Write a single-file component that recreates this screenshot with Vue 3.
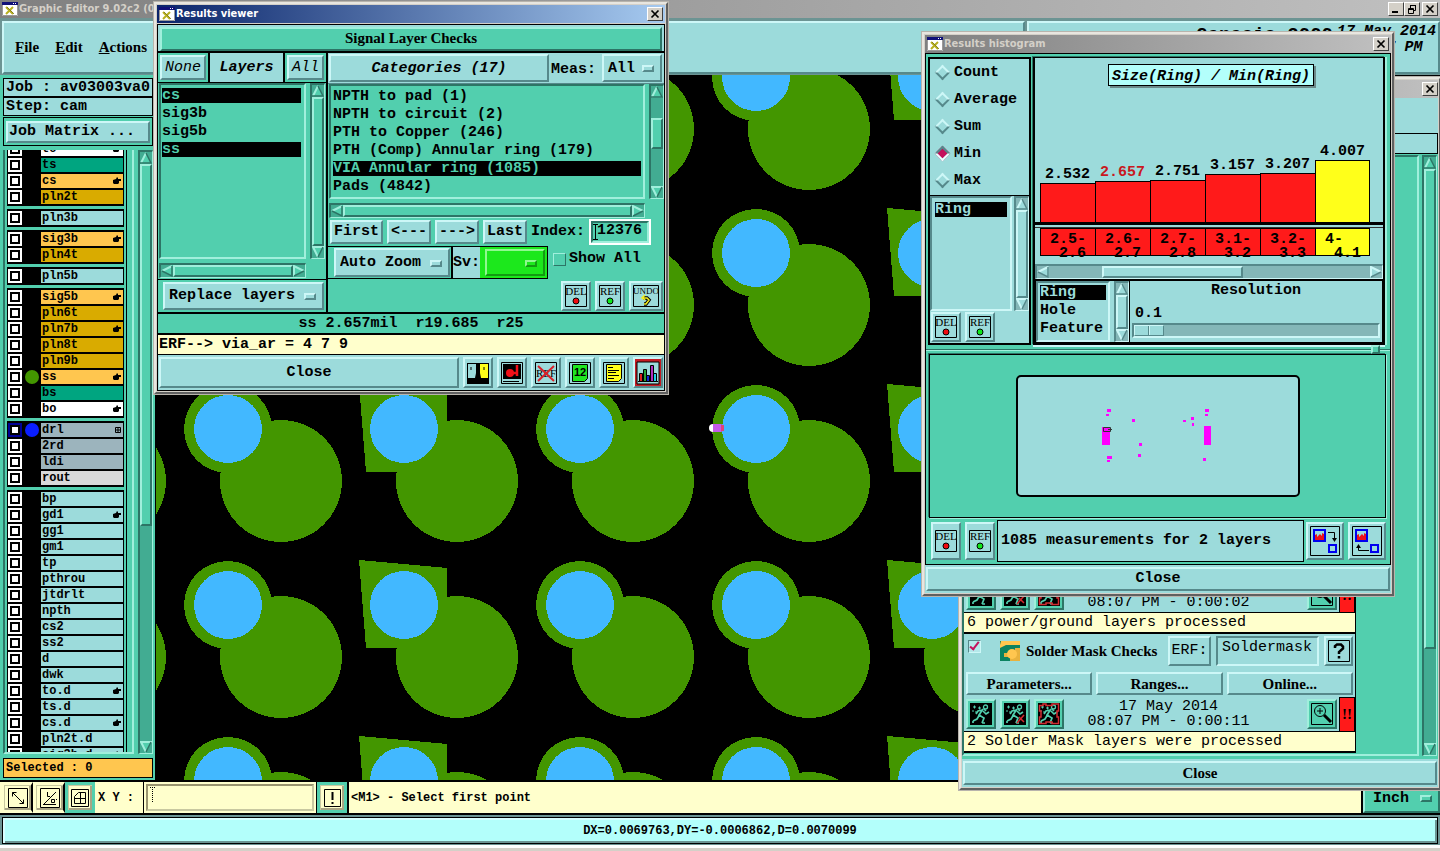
<script setup>
import { h, ref } from 'vue'

const arrow = (id) => h('svg', { class: 'sb-arrow', width: 12, height: 12, viewBox: '0 0 12 12', 'aria-hidden': 'true' }, [h('use', { href: '#' + id })])
const track = (before, size, rest) => h('div', { class: 'sb-track' }, [
  h('div', { style: { flexGrow: before } }),
  h('div', { class: 'sb-thumb', style: { flexGrow: size } }),
  h('div', { style: { flexGrow: rest } })
])
const VBar = ({ parts = [0, 1, 0] }) => h('div', { class: 'sb sb-v' }, [arrow('a-up'), track(...parts), arrow('a-down')])
VBar.props = ['parts']
const HBar = ({ parts = [0, 1, 0] }) => h('div', { class: 'sb sb-h' }, [arrow('a-left'), track(...parts), arrow('a-right')])
HBar.props = ['parts']

const L = (name, kind = 'c', mark = '', dot = '') => ({ name, kind, mark, dot })
const groups = [
  [L('to', 'w', 'h'), L('ts', 'g'), L('cs', 'o', 'h'), L('pln2t', 'd')],
  [L('pln3b')],
  [L('sig3b', 'o', 'h'), L('pln4t', 'd')],
  [L('pln5b')],
  [L('sig5b', 'o', 'h'), L('pln6t', 'd'), L('pln7b', 'd', 'h'), L('pln8t', 'd'), L('pln9b', 'd'), L('ss', 'o', 'h', '#439600'), L('bs', 'g'), L('bo', 'w', 'h')],
  [L('drl', 's', 'x', '#0a1eff'), L('2rd', 's'), L('ldi', 's'), L('rout', 'l')],
  [L('bp'), L('gd1', 'c', 'h'), L('gg1'), L('gm1'), L('tp'), L('pthrou'), L('jtdrlt'), L('npth'), L('cs2'), L('ss2'), L('d'), L('dwk'), L('to.d', 'c', 'h'), L('ts.d'), L('cs.d', 'c', 'h'), L('pln2t.d'), L('sig3b.d', 'c', 'h')]
]

const pads = []
for (let r = 0; r < 5; r++) {
  for (let c = 0; c < 6; c++) {
    pads.push({ x: -104 + c * 176, y: 2 + r * 176, square: c === 2 || c === 5 })
  }
}

const viewerLayers = [['cs', true], ['sig3b', false], ['sig5b', false], ['ss', true]]
const categories = ['NPTH to pad (1)', 'NPTH to circuit (2)', 'PTH to Copper (246)', 'PTH (Comp) Annular ring (179)', 'VIA Annular ring (1085)', 'Pads (4842)']
const category = ref(4)
const index = ref('12376')
const stats = ['Count', 'Average', 'Sum', 'Min', 'Max']
const stat = ref('Min')
const bars = [
  { v: '2.532', a: '2.5-', b: '2.6', hgt: 39 },
  { v: '2.657', a: '2.6-', b: '2.7', hgt: 41, hot: true },
  { v: '2.751', a: '2.7-', b: '2.8', hgt: 42 },
  { v: '3.157', a: '3.1-', b: '3.2', hgt: 48 },
  { v: '3.207', a: '3.2-', b: '3.3', hgt: 49 },
  { v: '4.007', a: '4-', b: '4.1', hgt: 62, ok: true }
]
const dots = [
  [86, 52, 8, 18], [188, 51, 7, 19], [91, 34, 4, 3], [90, 39, 3, 2], [116, 44, 3, 3], [123, 68, 3, 3], [122, 79, 3, 3],
  [91, 81, 5, 3], [91, 85, 3, 2], [167, 45, 3, 2], [175, 42, 3, 3], [176, 48, 2, 3], [189, 34, 4, 3], [189, 39, 3, 2], [187, 83, 3, 3]
]
const checks = [
  { title: 'Power/Ground Checks', erf: 'Inner', time: '08:07 PM - 0:00:02', msg: '6 power/ground layers processed' },
  { title: 'Solder Mask Checks', erf: 'Soldermask', time: '08:07 PM - 0:00:11', msg: '2 Solder Mask layers were processed' }
]
</script>

<template>
  <div class="desktop cyan">
    <svg class="defs" width="0" height="0" aria-hidden="true">
      <symbol id="a-up" viewBox="0 0 12 12"><path d="M6 0L12 12H0Z" fill="var(--bg)" /><path d="M6 1L1 11" stroke="var(--hi)" stroke-width="2" /><path d="M6 1L11 11H0" fill="none" stroke="var(--lo)" stroke-width="1.5" /></symbol>
      <symbol id="a-down" viewBox="0 0 12 12"><path d="M0 0H12L6 12Z" fill="var(--bg)" /><path d="M12 1H1L6 11" fill="none" stroke="var(--hi)" stroke-width="2" /><path d="M11 1L6 11" stroke="var(--lo)" stroke-width="1.5" /></symbol>
      <symbol id="a-left" viewBox="0 0 12 12"><path d="M0 6L12 0V12Z" fill="var(--bg)" /><path d="M1 6L11 1" stroke="var(--hi)" stroke-width="2" /><path d="M1 6L11 11V1" fill="none" stroke="var(--lo)" stroke-width="1.5" /></symbol>
      <symbol id="a-right" viewBox="0 0 12 12"><path d="M0 0L12 6L0 12Z" fill="var(--bg)" /><path d="M1 11V1L11 6" fill="none" stroke="var(--hi)" stroke-width="2" /><path d="M11 6L1 11" stroke="var(--lo)" stroke-width="1.5" /></symbol>
      <symbol id="win-icon" viewBox="0 0 16 16"><path d="M0 1H16V15H0Z" fill="#fff" /><path d="M0 1H16V4H0Z" fill="#101078" /><path d="M11 2h1v1h-1zM13 2h1v1h-1z" fill="#fff" /><path d="M4 6L11 13M11 6L4 13" stroke="#b8b020" stroke-width="2" /><path d="M5 6L12 13" stroke="#6c6810" stroke-width=".7" /><path d="M.5 4V14.5H15.5V4" fill="none" stroke="#9a9a9a" /></symbol>
      <symbol id="x" viewBox="0 0 10 10"><path d="M1.500 1.500L8.500 8.500M8.500 1.500L1.500 8.500" stroke="#000" stroke-width="1.700" /></symbol>
      <symbol id="del" viewBox="0 0 24 24"><path d="M1.500 1.500H22.500V22.500H1.500Z" fill="none" stroke="#000" /><text x="12" y="11" text-anchor="middle" font-family="Liberation Serif, serif" font-weight="400" font-size="11">DEL</text><circle cx="12" cy="17" r="3" fill="#f00b10" stroke="#000" /></symbol>
      <symbol id="ref" viewBox="0 0 24 24"><path d="M1.500 1.500H22.500V22.500H1.500Z" fill="none" stroke="#000" /><text x="12" y="11" text-anchor="middle" font-family="Liberation Serif, serif" font-weight="400" font-size="11">REF</text><circle cx="12" cy="17" r="3" fill="#10e81c" stroke="#000" /></symbol>
      <symbol id="hand" viewBox="0 0 8 8"><path d="M0 3L3 2L4 0L5 1V2H8V4H6V6L5 7H1L0 6Z" fill="#000" /></symbol>
      <symbol id="run" viewBox="0 0 22 22"><path d="M0 0H22V22H0Z" fill="#000" /><circle cx="15.500" cy="4" r="2" fill="none" stroke="#52cfae" stroke-width="1.300" /><path d="M13 6L9 12L14 15L12 20M10 11L7 16L3 18M12 7L8 8L6 11M13 8L16 11L19 9M14 6L16 8M12 20H15M3 18V20" fill="none" stroke="#52cfae" stroke-width="1.700" /><path d="M3 4h3M4.500 2.500v3M8 5h3M9.500 3.500v3M2 8h2M5 9h2" stroke="#52cfae" /></symbol>
    </svg>

    <header class="title main-title">
      <svg width="16" height="16"><use href="#win-icon" /></svg>
      <span class="grow">Graphic Editor 9.02c2 (0)</span>
      <button class="wbtn" aria-label="Minimize"><svg width="10" height="10"><path d="M1 7h6v2H1z" /></svg></button>
      <button class="wbtn" aria-label="Restore"><svg width="10" height="10" fill="none" stroke="#000"><path d="M3.500 4V1.500H8.500V6.500H7M3 1.500H9M1.500 4.500H6.500V9.500H1.500ZM1 5.500H7" /></svg></button>
      <button class="wbtn gap" aria-label="Close"><svg width="10" height="10"><use href="#x" /></svg></button>
    </header>

    <div class="menubar">
      <nav class="menus raised">
        <button><u>F</u>ile</button><button><u>E</u>dit</button><button><u>A</u>ctions</button>
      </nav>
      <div class="brand raised">
        <span class="brand-name">Genesis 2000</span>
        <span class="brand-date">17 May 2014<br>08:07 PM</span>
      </div>
    </div>

    <main class="work">
      <aside class="side green">
        <div class="job">Job : av03003va0</div>
        <div class="job">Step: cam</div>
        <div class="matrix"><button class="btn cyan">Job Matrix ...</button></div>
        <div class="layers">
          <div class="layer-view">
            <div class="layer-list">
              <div v-for="(g, i) in groups" :key="i" class="group">
                <div v-for="l in g" :key="l.name" class="layer">
                  <input type="checkbox" :class="{ sel: l.name === 'drl' }" :aria-label="'Show ' + l.name">
                  <span class="dot"><svg v-if="l.dot" width="14" height="14"><circle cx="7" cy="7" r="7" :fill="l.dot" /></svg></span>
                  <span class="lname" :class="'k-' + l.kind">{{ l.name }}
                    <svg v-if="l.mark === 'h'" width="8" height="8"><use href="#hand" /></svg>
                    <svg v-if="l.mark === 'x'" width="6" height="6"><path d="M.5 .5H5.500V5.500H.5ZM3 0V6M0 3H6" fill="none" stroke="#000" /></svg>
                  </span>
                </div>
              </div>
            </div>
          </div>
          <VBar :parts="[0, 360, 216]" />
        </div>
        <div class="selected">Selected : 0</div>
      </aside>
      <svg class="board" aria-label="Board view">
        <g v-for="(p, i) in pads" :key="i" :transform="`translate(${p.x} ${p.y})`" shape-rendering="crispEdges">
          <path v-if="p.square" d="M-45 -45L43 -37V43H-38Z" fill="#439600" />
          <circle v-else r="44" fill="#439600" />
          <circle cx="53" cy="52" r="61" fill="#439600" />
          <circle r="34" fill="#42b8ff" />
        </g>
        <circle cx="557" cy="353" r="4" fill="#fff" /><path d="M557 349h8v8h-8z" fill="#c45ae8" /><circle cx="564" cy="353" r="4" fill="#c45ae8" /><path d="M565 350h3v6h-3z" fill="#e0407c" />
      </svg>
    </main>

    <div class="prompt">
      <button class="tool" aria-label="Measure"><svg width="20" height="20" fill="none" stroke="#000"><path d="M.5 .5H19.500V19.500H.5ZM4.500 8.500V4.500H8.500M4.500 4.500L15.500 15.500M15.500 11.500V15.500H11.500" /></svg></button>
      <button class="tool" aria-label="Angle"><svg width="20" height="20" fill="none" stroke="#000"><path d="M.5 .5H19.500V19.500H.5ZM3 16.500H16M4 16L16 4M7.500 4V8.500H10M11.500 11.500h3v3h-3zM16 11l1 1" /></svg></button>
      <button class="tool on" aria-label="Grid"><svg width="18" height="18" fill="none" stroke="#000"><path d="M.5 .5H17.500V17.500H.5ZM3.500 14.500V7.500L7.500 3.500H14.500V14.500ZM3 9.500H15M9.500 3V15" /></svg></button>
      <label class="xy" for="xy">X Y :</label>
      <div class="xybox"><input id="xy" type="text"><svg class="caret" width="5" height="16" stroke="#000" stroke-dasharray="1 1"><path d="M2.500 0V16M0 .5H5" /></svg></div>
      <button class="tool on bang" aria-label="Alert"><svg width="17" height="18" fill="none" stroke="#000"><path d="M.5 .5H16.500V17.500H.5Z" /><path d="M8.500 3V11M8.500 13V15" stroke-width="2" /></svg></button>
      <div class="hint">&lt;M1&gt; - Select first point</div>
      <label class="pick units green"><select aria-label="Units"><option>Inch</option></select></label>
    </div>
    <footer class="status"><div>DX=0.0069763,DY=-0.0006862,D=0.0070099</div></footer>

    <!-- Checklist window -->
    <section class="win checks">
      <header class="title grey"><span class="grow"></span><button class="wbtn" aria-label="Close"><svg width="10" height="10"><use href="#x" /></svg></button></header>
      <div class="checks-head"><div></div></div>
      <div class="checks-body green">
        <div class="checks-view">
          <div v-for="c in checks" :key="c.title" class="check cyan">
            <div class="check-top">
              <input type="checkbox" checked :aria-label="c.title">
              <svg class="mask" width="20" height="20"><path d="M0 0H20V20H0Z" fill="#0b8260" /><path d="M1 0H20V4H6L0 7V4Z" fill="#ffc64f" /><path d="M20 7H15V12H4V16H10V20H20Z" fill="#e9b23d" /><circle cx="12" cy="13" r="5" fill="#ffc64f" /></svg>
              <strong class="grow">{{ c.title }}</strong>
              <button class="btn erf">ERF:</button>
              <input class="erfin" type="text" :value="c.erf" aria-label="ERF">
              <button class="btn help" aria-label="Help"><svg width="22" height="22"><path d="M.5 .5H21.500V21.500H.5Z" fill="none" stroke="#000" /><path d="M7 8V6L9 4.500H13L15 6.500V8.500L11 12V14M11 16V18.500" fill="none" stroke="#000" stroke-width="2.500" /></svg></button>
            </div>
            <div class="check-btns"><button class="btn">Parameters...</button><button class="btn">Ranges...</button><button class="btn">Online...</button></div>
            <div class="check-run">
              <button class="btn green ic" aria-label="Run"><svg width="22" height="22"><use href="#run" /></svg></button>
              <button class="btn green ic" aria-label="Run on features"><svg width="22" height="22"><use href="#run" /><path d="M13 20L20 12M15 14l5 5" stroke="#d32a30" stroke-width="1.500" /></svg></button>
              <button class="btn green ic" aria-label="Run in profile"><svg width="22" height="22"><use href="#run" /><path d="M1.500 2.500H5V1H8V2.500H14V1H20.500V8H19V14H20.500V20.500H14V19H8V20.500H1.500V14H3V8H1.500Z" fill="none" stroke="#d32a30" stroke-width="1.500" /></svg></button>
              <div class="when">17 May 2014<br>{{ c.time }}</div>
              <button class="btn green ic" aria-label="View results"><svg width="22" height="22"><path d="M.5 .5H21.500V21.500H.5Z" fill="none" stroke="#000" /><circle cx="9" cy="8" r="5.500" fill="none" stroke="#000" /><path d="M6 8H12M9 5V11" stroke="#000" /><path d="M13 12L20 19" stroke="#000" stroke-width="3" /></svg></button>
              <span class="alert">!!</span>
            </div>
            <div class="msg">{{ c.msg }}</div>
          </div>
        </div>
        <VBar :parts="[0, 483, 96]" />
      </div>
      <div class="checks-foot"><button class="btn cyan">Close</button></div>
    </section>

    <!-- Histogram window -->
    <section class="win hist">
      <header class="title grey">
        <svg width="16" height="16"><use href="#win-icon" /></svg><span class="grow">Results histogram</span>
        <button class="wbtn" aria-label="Close"><svg width="10" height="10"><use href="#x" /></svg></button>
      </header>
      <div class="hist-body green">
        <div class="hist-top">
          <div class="hist-left cyan">
            <div class="radios">
              <label v-for="s in stats" :key="s"><input v-model="stat" type="radio" name="stat" :value="s">{{ s }}</label>
            </div>
            <div class="mlist">
              <ul class="list"><li><button class="on">Ring</button></li></ul>
              <VBar />
            </div>
            <div class="dr">
              <button class="btn ic" aria-label="Delete"><svg width="24" height="24"><use href="#del" /></svg></button>
              <button class="btn ic" aria-label="Refresh"><svg width="24" height="24"><use href="#ref" /></svg></button>
            </div>
          </div>
          <div class="hist-right cyan">
            <div class="chart">
              <div class="chart-title">Size(Ring) / Min(Ring)</div>
              <div class="bars">
                <div v-for="b in bars" :key="b.v" class="col">
                  <span :class="{ hot: b.hot }">{{ b.v }}</span>
                  <div class="bar" :class="{ ok: b.ok }" :style="{ height: b.hgt + 'px' }"></div>
                </div>
              </div>
              <div class="ranges">
                <div v-for="b in bars" :key="b.v" class="range" :class="{ ok: b.ok }"><span>{{ b.a }}</span><span class="to">{{ b.b }}</span></div>
              </div>
            </div>
            <HBar :parts="[54, 140, 130]" />
            <div class="res">
              <ul class="list"><li><button class="on">Ring</button></li><li><button>Hole</button></li><li><button>Feature</button></li></ul>
              <VBar />
              <div class="res-main">
                <label for="res">Resolution</label>
                <span>0.1</span>
                <input id="res" type="range" min="0" max="100" value="0">
              </div>
            </div>
          </div>
        </div>
        <div class="sash"><i></i></div>
        <div class="map">
          <svg width="284" height="122">
            <rect x="1" y="1" width="282" height="120" rx="4" fill="#9cdbdb" stroke="#000" stroke-width="2" />
            <rect v-for="(d, i) in dots" :key="i" :x="d[0]" :y="d[1]" :width="d[2]" :height="d[3]" fill="#ff00ff" />
            <path d="M87.500 52.500H94.500V56.500H87.500ZM92 54.500H96" fill="none" stroke="#333" />
          </svg>
        </div>
        <div class="hist-row cyan">
          <button class="btn ic" aria-label="Delete"><svg width="24" height="24"><use href="#del" /></svg></button>
          <button class="btn ic" aria-label="Refresh"><svg width="24" height="24"><use href="#ref" /></svg></button>
          <div class="count">1085 measurements for 2 layers</div>
          <button class="btn ic big" aria-label="Next layer"><svg width="30" height="30"><path d="M.5 .5H29.500V29.500H.5Z" fill="none" stroke="#000" /><path d="M4 4H15V15H4Z" fill="#f01018" stroke="#0000f0" stroke-width="2" /><path d="M5 5H14V8L12 7V10L10 8L7 11V8L5 9Z" fill="#9cdbdb" /><path d="M19 19H26V26H19Z" fill="none" stroke="#0000f0" stroke-width="2" /><path d="M18 6.500H24.500V15" fill="none" stroke="#000" /><path d="M22 12H27L24.500 16Z" /></svg></button>
          <button class="btn ic big" aria-label="Previous layer"><svg width="30" height="30"><path d="M.5 .5H29.500V29.500H.5Z" fill="none" stroke="#000" /><path d="M4 4H15V15H4Z" fill="#f01018" stroke="#0000f0" stroke-width="2" /><path d="M5 5H14V8L12 7V10L10 8L7 11V8L5 9Z" fill="#9cdbdb" /><path d="M19 19H26V26H19Z" fill="none" stroke="#0000f0" stroke-width="2" /><path d="M17 24.500H6.500V20" fill="none" stroke="#000" /><path d="M4 22H9L6.500 18Z" /></svg></button>
        </div>
      </div>
      <div class="hist-foot"><button class="btn cyan">Close</button></div>
    </section>

    <!-- Results viewer window -->
    <section class="win viewer">
      <header class="title active">
        <svg width="16" height="16"><use href="#win-icon" /></svg><span class="grow">Results viewer</span>
        <button class="wbtn" aria-label="Close"><svg width="10" height="10"><use href="#x" /></svg></button>
      </header>
      <div class="vbody">
        <div class="vtitle"><div class="raised green">Signal Layer Checks</div></div>
        <div class="vcols">
          <div class="vleft green">
            <div class="lhead"><div><button class="btn cyan">None</button></div><strong>Layers</strong><div><button class="btn cyan">All</button></div></div>
            <div class="lgrid">
              <ul class="list"><li v-for="l in viewerLayers" :key="l[0]"><button :class="{ on: l[1] }">{{ l[0] }}</button></li></ul>
              <VBar />
              <HBar />
            </div>
            <div class="replace"><label class="pick cyan"><select aria-label="Layer mode"><option>Replace layers</option></select></label></div>
          </div>
          <div class="vright green">
            <div class="rhead cyan"><button class="btn">Categories (17)</button><span>Meas:</span><label class="pick"><select aria-label="Meas"><option>All</option></select></label></div>
            <div class="rgrid">
              <ul class="list"><li v-for="(c, i) in categories" :key="c"><button :class="{ on: i === category }" @click="category = i">{{ c }}</button></li></ul>
              <VBar :parts="[22, 30, 40]" />
              <HBar />
            </div>
            <div class="nav">
              <button class="btn cyan">First</button><button class="btn cyan">&lt;---</button><button class="btn cyan">---&gt;</button><button class="btn cyan">Last</button>
              <label for="idx">Index:</label>
              <div class="idx"><input id="idx" v-model="index" type="text"><svg width="5" height="16"><path d="M0 .5H5M2.500 0V16M0 15.500H5" stroke="#000" /></svg></div>
            </div>
            <div class="zoomrow">
              <div class="zbox"><label class="pick cyan"><select aria-label="Zoom"><option>Auto Zoom</option></select></label></div>
              <div class="sv"><span>Sv:</span><div><label class="pick lime"><select aria-label="Severity"><option></option></select></label></div></div>
              <label class="showall"><input type="checkbox">Show All</label>
            </div>
            <div class="acts">
              <button class="btn cyan ic" aria-label="Delete"><svg width="24" height="24"><use href="#del" /></svg></button>
              <button class="btn cyan ic" aria-label="Refresh"><svg width="24" height="24"><use href="#ref" /></svg></button>
              <button class="btn cyan ic wide" aria-label="Undo"><svg width="28" height="24"><path d="M1.500 1.500H26.500V22.500H1.500Z" fill="none" stroke="#000" /><text x="14" y="10" text-anchor="middle" font-family="Liberation Serif, serif" font-weight="400" font-size="9">UNDO</text><path d="M11 14H15L17 16L14 20H12" fill="none" stroke="#000" stroke-width="3.500" /><path d="M11 14H15L17 16L14 20H12M13 11L10 14L13 16" fill="none" stroke="#f4ee20" stroke-width="1.500" /></svg></button>
            </div>
          </div>
        </div>
        <div class="vstat">ss 2.657mil&nbsp; r19.685&nbsp; r25</div>
        <div class="verf">ERF--&gt; via_ar = 4 7 9</div>
        <div class="vfoot">
          <button class="btn grow">Close</button>
          <button class="btn ic" aria-label="Contrast"><svg width="24" height="24"><path d="M1 2H23V23H1Z" fill="#000" /><path d="M2 3H10V12L9 17H2Z" fill="#9cdbdb" /><path d="M14 3H22V17H15L14 12Z" fill="#ffff1a" /><path d="M5 6v3M18 6v3" stroke="#000" /></svg></button>
          <button class="btn ic" aria-label="Record"><svg width="24" height="24"><path d="M1.500 1.500H22.500V22.500H1.500Z" fill="none" stroke="#000" /><path d="M3 3H21V18H3Z" /><circle cx="10" cy="12" r="4" fill="#f01018" /><path d="M13 12H17M17 4V15" stroke="#f01018" stroke-width="2.500" /><path d="M3 20.500H19" stroke="#000" /></svg></button>
          <button class="btn ic" aria-label="No reference"><svg width="24" height="24"><path d="M1.500 1.500H22.500V22.500H1.500Z" fill="none" stroke="#000" /><text x="12" y="16" text-anchor="middle" font-family="Liberation Serif, serif" font-weight="400" font-size="11">REF</text><path d="M4 5L20 20M20 5L4 20" stroke="#d8222a" stroke-width="2" /></svg></button>
          <button class="btn ic" aria-label="Number pages"><svg width="24" height="24"><path d="M1.500 1.500H22.500V22.500H1.500Z" fill="none" stroke="#000" /><path d="M4.500 3.500H19.500V17.500L16.500 20.500H4.500Z" fill="#20e820" stroke="#000" /><text x="12" y="15" text-anchor="middle" font-family="Liberation Sans, sans-serif" font-weight="bold" font-size="11">12</text></svg></button>
          <button class="btn ic" aria-label="Notes"><svg width="24" height="24"><path d="M1.500 1.500H22.500V22.500H1.500Z" fill="none" stroke="#000" /><path d="M4.500 3.500H19.500V17.500L16.500 20.500H4.500Z" fill="#ffff1a" stroke="#000" /><path d="M6 6.500H11M6 9.500H17M6 11.500H14M6 14.500H17M6 17.500H12" stroke="#000" /></svg></button>
          <button class="btn ic red" aria-label="Histogram"><svg width="24" height="24"><path d="M1 1H23V23H1Z" fill="#9cdbdb" stroke="#000" /><path d="M2 20.500H22" stroke="#000" /><g stroke="#000"><path d="M3.500 12.500h3v8h-3z" fill="#e02020" /><path d="M7.500 8.500h3v12h-3z" fill="#28a030" /><path d="M10.500 14.500h3v6h-3z" fill="#1028d0" /><path d="M14.500 4.500h3v16h-3z" fill="#b030c0" /><path d="M17.500 12.500h3v8h-3z" fill="#20d0e8" /></g></svg></button>
        </div>
      </div>
    </section>
  </div>
</template>

<style>
html, body { height: 100%; background: #d4d0c8; }
.green { --bg: #52cfae; --hi: #a0efdc; --lo: #2d7566; --tr: #42ac92; background: var(--bg); }
.cyan { --bg: #9cdbdb; --hi: #cdf7f7; --lo: #56898b; --tr: #84b7b8; background: var(--bg); }
.sb { display: flex; flex: none; background: var(--tr); border: 1px solid; border-width: 2px 1px 1px 2px; border-color: var(--lo) var(--hi) var(--hi) var(--lo); box-sizing: border-box; min-height: 0; min-width: 0; }
.sb-v { flex-direction: column; width: 15px; }
.sb-h { height: 15px; }
.sb-arrow { flex: none; display: block; }
.sb-track { flex: 1; display: flex; min-width: 0; min-height: 0; }
.sb-v .sb-track { flex-direction: column; }
.sb-thumb { background: var(--bg); border: 2px solid; border-color: var(--hi) var(--lo) var(--lo) var(--hi); box-sizing: border-box; }
</style>

<style scoped>
*, *::after { box-sizing: border-box; }
.desktop { position: relative; height: 100vh; overflow: hidden; display: flex; flex-direction: column; font: bold 15px/18px "Liberation Mono", monospace; color: #000; }
.desktop.cyan { background: #d4d0c8; }
.defs { position: absolute; }
button, input, select { font: inherit; color: inherit; margin: 0; padding: 0; border-radius: 0; outline: none; }
button { background: none; border: 0; white-space: nowrap; }
svg { display: block; flex: none; }
ul { list-style: none; margin: 0; padding: 0; }
.grow { flex: 1; }
.raised { border: 2px solid; border-color: var(--hi) var(--lo) var(--lo) var(--hi); }
.btn { background: var(--bg); border: 2px solid; border-color: var(--hi) var(--lo) var(--lo) var(--hi); display: flex; align-items: center; justify-content: center; }
.ic { width: 30px; height: 30px; flex: none; }

.title { flex: none; height: 18px; display: flex; align-items: center; padding: 0 2px; gap: 1px; font: bold 11px/18px "DejaVu Sans Condensed", "DejaVu Sans", sans-serif; color: #d4d0c8; background: linear-gradient(90deg, #808080, #c0c0c0); white-space: nowrap; }
.title.active { background: linear-gradient(90deg, #0a246a, #a6caf0); color: #fff; }
.main-title { gap: 0; }
.main-title .grow { padding-left: 1px; }
.wbtn { width: 16px; height: 14px; background: #d4d0c8; border: 1px solid; border-color: #fff #404040 #404040 #fff; display: flex; align-items: center; justify-content: center; flex: none; }
.wbtn.gap { margin-left: 2px; }

.menubar { flex: none; height: 57px; display: flex; gap: 2px; padding: 3px 0 1px 2px; background: #6c9493; }
.menubar .raised { background: #9cdbdb; }
.menus { flex: 1; display: flex; align-items: center; padding: 0 0 2px 11px; gap: 16px; font: bold 15px/18px "Liberation Serif", serif; }
.brand { width: 413px; flex: none; display: flex; justify-content: flex-end; font-style: italic; gap: 4px; padding-right: 2px; line-height: 16px; text-align: center; }
.brand-name { font-style: normal; font-size: 19px; line-height: 24px; }
.brand-date { padding-top: 1px; }

.work { flex: 1; min-height: 0; display: flex; background: #000; }
.side { width: 155px; flex: none; display: flex; flex-direction: column; padding: 3px 2px 2px 3px; }
.job { height: 19px; background: #9cdbdb; border: 1px solid #000; padding-left: 2px; line-height: 18px; white-space: nowrap; }
.matrix { border: 1px solid #000; margin-top: 1px; padding: 3px 2px 2px; height: 29px; }
.matrix .btn { width: 100%; height: 22px; justify-content: flex-start; padding-left: 1px; }
.layers { flex: 1; min-height: 0; display: flex; margin: 4px 0 4px 0; justify-content: space-between; }
.layer-view { width: 131px; overflow: hidden; border: solid; border-width: 0 2px 2px 0; border-color: var(--hi); padding-right: 5px; border-left: 2px solid var(--lo); }
.layer-list { margin-top: -10px; padding: 0 0 0 2px; border-right: 1px solid #000; display: flex; flex-direction: column; gap: 3px; }
.group { background: #000; padding: 1px; width: 117px; }
.layer { display: flex; height: 16px; align-items: center; font-size: 12px; line-height: 14px; }
.layer input { appearance: none; width: 14px; height: 14px; border: 2px solid #fff; background: #fff; box-shadow: inset 0 0 0 2px #000; }
.layer input.sel { border-color: #000096; box-shadow: inset 0 0 0 2px #000; }
.dot { width: 19px; padding-left: 3px; }
.lname { flex: 1; height: 14px; padding-left: 1px; display: flex; align-items: center; justify-content: space-between; padding-right: 2px; }
.k-c { background: #9cdbdb; } .k-w { background: #fff; } .k-g { background: #00a580; } .k-o { background: #ffc64f; }
.k-d { background: #d9ab00; } .k-s { background: #9cb4bd; } .k-l { background: #d9d9d9; }
.selected { height: 20px; background: #ffc64f; border: 1px solid #000; font-size: 12px; line-height: 18px; padding-left: 2px; }
.board { flex: 1; width: 0; height: 100%; margin-left: 1px; }

.prompt { flex: none; height: 35px; border-top: 2px solid #000; border-bottom: 2px solid #000; background: #ffffcc; display: flex; padding-left: 1px; font-size: 12px; }
.tool { width: 32px; height: 31px; display: flex; align-items: center; justify-content: center; border: 3px solid #ffffcc; border-right: 2px solid #000; box-shadow: inset 1px 1px 0 #c8c8a0, inset -2px -2px 0 #a8a484; }
.tool.on { width: 30px; background: #ffffcc; border: 3px solid #52cfae; }
.xy { padding: 0 12px 0 3px; line-height: 32px; font-size: 12px; border-right: 1px solid #000; width: 49px; white-space: nowrap; }
.xybox { position: relative; width: 173px; border-right: 1px solid #000; padding: 2px; }
.xybox input { width: 100%; height: 100%; background: #ffffcc; border: 2px solid; border-color: #99946f #c8c8a0 #c8c8a0 #99946f; }
.caret { position: absolute; left: 6px; top: 5px; }
.bang { border-right: 3px solid #52cfae; }
.hint { flex: 1; border-left: 2px solid #000; padding-left: 2px; line-height: 33px; }
.units { width: 79px; border-left: 2px solid #000; font-size: 15px; }
.status { flex: none; height: 33px; background: #6c9493; padding: 2px 2px 0; border-bottom: 3px solid #fff; margin-bottom: 3px; }
.status div { height: 27px; background: #b3fffb; border: 1px solid #000; box-shadow: inset 2px 2px 0 #d8ffff, inset -2px -2px 0 #6c9493; font-size: 12px; line-height: 26px; text-align: center; }

.pick { position: relative; display: flex; }
.pick select { appearance: none; width: 100%; background: var(--bg); border: 2px solid; border-color: var(--hi) var(--lo) var(--lo) var(--hi); padding-left: 4px; }
.pick.units select { padding: 2px 0 0 8px; }
.pick::after { content: ""; position: absolute; right: 8px; top: 50%; margin-top: -3px; width: 12px; height: 7px; border: 2px solid; border-color: var(--hi) var(--lo) var(--lo) var(--hi); }
.pick.lime { --bg: #1ce81c; --hi: #90f890; --lo: #129a12; }

.win { position: absolute; background: #d4d0c8; border: 2px solid; border-color: #e8e6e0 #606060 #606060 #e8e6e0; padding: 1px; display: flex; flex-direction: column; box-shadow: 0 0 0 1px #b8b4ac; }
.list { background: var(--bg); border: 2px solid; border-color: var(--lo) var(--hi) var(--hi) var(--lo); padding: 2px 3px; overflow: hidden; }
.list li { height: 18px; display: flex; align-items: center; }
.list button { width: 100%; height: 15px; line-height: 15px; text-align: left; }
.list .on { background: #000; color: var(--bg); }

.viewer { left: 154px; top: 2px; width: 514px; }
.viewer .vbody { border: 1px solid #000; margin-top: 1px; display: flex; flex-direction: column; background: #9cdbdb; --bg: #9cdbdb; --hi: #cdf7f7; --lo: #56898b; }
.vtitle { height: 28px; padding: 2px; border-bottom: 2px solid #000; }
.vtitle div { height: 24px; line-height: 19px; text-align: center; font-family: "Liberation Serif", serif; }
.vcols { display: flex; height: 261px; border-bottom: 2px solid #000; }
.vleft { width: 170px; border-right: 2px solid #000; display: flex; flex-direction: column; }
.lhead { height: 30px; display: flex; border-bottom: 1px solid #000; font-style: italic; }
.lhead strong { flex: 1; text-align: center; line-height: 30px; background: #9cdbdb; border: solid #000; border-width: 0 2px; }
.lhead div { padding: 2px; display: flex; }
.lhead .btn { font-weight: normal; padding: 1px 3px 0; font-style: italic; }
.lgrid { flex: 1; display: grid; grid-template-columns: 1fr 15px; grid-template-rows: 1fr 15px; gap: 4px; padding: 0 1px 1px; min-height: 0; }
.lgrid .list { padding: 1px 3px 1px 1px; }
.replace { border-top: 1px solid #000; height: 33px; padding: 2px 2px 2px 5px; display: flex; }
.replace .pick, .zbox .pick { flex: 1; }
.vright { flex: 1; display: flex; flex-direction: column; min-width: 0; }
.rhead { height: 31px; display: flex; padding: 1px 2px 1px 1px; border-bottom: 1px solid var(--lo); }
.rhead .btn { flex: 1; font-style: italic; padding-top: 1px; }
.rhead span { line-height: 31px; padding: 0 6px 0 2px; }
.rhead .pick { width: 60px; }
.rhead .pick select { padding-top: 2px; }
.rgrid { height: 134px; display: grid; grid-template-columns: 1fr 15px; grid-template-rows: 1fr 15px; gap: 4px; padding: 0 0 0 1px; }
.rgrid .list { padding: 1px 2px; }
.nav { height: 28px; display: flex; align-items: stretch; padding: 2px; gap: 4px; }
.nav .btn { padding: 0 2px; }
.nav label { line-height: 24px; }
.idx { position: relative; border: 2px solid #fff; width: 62px; margin: -1px 0; }
.idx input { width: 100%; height: 100%; background: #52cfae; border: 2px solid; border-color: #2d7566 #a0efdc #a0efdc #2d7566; padding: 0 0 3px 4px; display: block; }
.idx svg { position: absolute; left: 2px; top: 3px; }
.zoomrow { height: 33px; display: flex; }
.zbox { border: solid #000; border-width: 1px 2px 1px 0; width: 125px; padding: 1px 1px 1px 6px; display: flex; }
.sv { display: flex; background: #9cdbdb; border: 1px solid #000; border-left: 0; line-height: 31px; }
.sv > div { background: #1ce81c; padding: 2px 2px 2px 5px; display: flex; }
.sv .pick { width: 60px; }
.showall { padding: 4px 0 0 5px; display: flex; align-items: flex-start; gap: 3px; line-height: 18px; }
.showall input { appearance: none; width: 13px; height: 13px; margin-top: 3px; border: 1px solid; border-color: #a0efdc #2d7566 #2d7566 #a0efdc; }
.acts { flex: 1; display: flex; justify-content: flex-end; align-items: center; gap: 4px; padding-right: 1px; }
.wide { width: 34px; }
.vstat { height: 20px; background: #52cfae; text-align: center; line-height: 20px; border-bottom: 1px solid #000; }
.verf { height: 21px; background: #ffffcc; border: solid #000; border-width: 1px 0; padding-left: 1px; line-height: 20px; }
.vfoot { height: 35px; display: flex; padding: 2px 1px; gap: 4px; }
.vfoot .btn { height: 31px; }
.vfoot .red { background: #c41c24; }

.hist { left: 922px; top: 32px; width: 472px; }
.hist-body { border: 1px solid #000; padding: 3px 3px 1px 2px; display: flex; flex-direction: column; }
.hist-top { display: flex; gap: 2px; height: 288px; }
.hist-left { width: 103px; border: 2px solid #000; display: flex; flex-direction: column; flex: none; }
.radios { height: 137px; border-bottom: 1px solid #000; display: flex; flex-direction: column; }
.radios label { height: 27px; display: flex; align-items: center; gap: 6px; padding-left: 7px; }
.radios input { appearance: none; width: 11px; height: 11px; transform: rotate(45deg); border: 2px solid; border-color: #cdf7f7 #56898b #56898b #cdf7f7; }
.radios input:checked { background: #c4105c; border-color: #56898b #e8ffff #e8ffff #56898b; }
.mlist { display: flex; justify-content: space-between; height: 115px; }
.mlist .list { width: 82px; }
.dr { display: flex; gap: 4px; padding: 1px; }
.hist-right { flex: 1; border: 2px solid #000; border-top: 1px solid #000; box-shadow: 0 2px 0 #cdf7f7, 2px 0 0 #a0efdc, -1px -1px 0 #2d7566; margin-right: 2px; display: flex; flex-direction: column; }
.chart { flex: 1; display: flex; flex-direction: column; position: relative; }
.chart-title { align-self: center; margin: 6px 0 0 4px; border: 1px solid #000; background: #b3fffb; font-style: italic; height: 22px; line-height: 24px; padding: 0 3px; box-shadow: 2px 2px 0 #6b8a8a; }
.bars { flex: 1; display: flex; align-items: flex-end; padding-left: 5px; border-bottom: 3px solid #000; }
.col { width: 55px; flex: none; text-align: center; font-weight: bold; line-height: 16px; }
.col span { display: block; }
.hot { color: #c81820; }
.bar { background: #ff1a1a; border: solid #000; border-width: 1px 0 0 1px; }
.ok.bar, .ok.range { background: #ffff1a; border-right-width: 1px; }
.ranges { display: flex; padding-left: 5px; margin: 2px 0 8px; border-top: 1px solid #333; height: 29px; }
.range { width: 55px; background: #ff1a1a; border: solid #000; border-width: 1px 0 1px 1px; line-height: 14px; display: flex; flex-direction: column; padding: 4px 0 0 9px; }
.range .to { padding-left: 9px; }
.res { height: 64px; display: flex; border: solid #000; border-width: 2px 1px 1px 1px; flex: none; }
.res .list { width: 74px; margin-right: 4px; padding: 0 2px; }
.res-main { flex: 1; border-left: 1px solid #000; padding: 0 2px; display: flex; flex-direction: column; }
.res-main label { text-align: center; height: 22px; line-height: 19px; }
.res-main span { padding-left: 3px; line-height: 22px; height: 20px; }
.res-main input { appearance: none; width: 100%; height: 15px; background: #84b7b8; border: 2px solid; border-color: #56898b #cdf7f7 #cdf7f7 #56898b; }
.res-main input::-webkit-slider-thumb { appearance: none; width: 30px; height: 11px; border: 1px solid; border-color: #cdf7f7 #56898b #56898b #cdf7f7; background: linear-gradient(90deg, #9cdbdb 13px, #56898b 13px, #56898b 14px, #cdf7f7 14px, #cdf7f7 15px, #9cdbdb 15px); }
.sash { position: relative; height: 9px; margin: 0 -3px 0 -2px; display: flex; align-items: center; }
.sash::before { content: ""; flex: 1; border-top: 1px solid #2d7566; border-bottom: 1px solid #a0efdc; }
.sash i { position: absolute; right: 10px; top: 0; width: 9px; height: 9px; background: #52cfae; border: 2px solid; border-color: #a0efdc #2d7566 #2d7566 #a0efdc; }
.map { height: 164px; border: 1px solid #000; box-shadow: -1px -1px 0 #2d7566, 1px 1px 0 #a0efdc; margin: 0 1px; display: flex; justify-content: center; align-items: center; }
.hist-row { display: flex; gap: 2px; padding: 1px 1px 1px 3px; margin-top: 1px; height: 44px; align-items: center; }
.hist-row.cyan { background: #52cfae; }
.hist-row .btn { height: 38px; background: #9cdbdb; }
.hist-row .ic + .ic { margin-left: 2px; }
.hist-row .big { width: 38px; height: 38px; }
.count { flex: 1; height: 42px; border: 1px solid #000; background: #9cdbdb; line-height: 40px; padding-left: 3px; }
.hist-foot { background: #9cdbdb; padding: 2px 1px; }
.hist-foot .btn { width: 100%; height: 24px; }

.checks { left: 959px; top: 77px; width: 482px; height: 713px; }
.checks .title { padding-right: 0; }
.checks-head { height: 56px; background: #9cdbdb; padding-top: 35px; flex: none; }
.checks-head div { height: 21px; border: 1px solid #000; }
.checks-body { flex: 1; min-height: 0; display: flex; padding: 1px 1px 3px 0; gap: 3px; }
.checks-view { flex: 1; min-width: 0; border: 2px solid; border-color: var(--lo) var(--hi) var(--hi) var(--lo); display: flex; flex-direction: column; justify-content: flex-end; overflow: hidden; padding-bottom: 1px; align-items: flex-start; }
.check { width: 392px; border-right: 1px solid #000; border-bottom: 2px solid #000; flex: none; }
.check-top { height: 38px; display: flex; padding: 2px 2px 0; font-family: "Liberation Serif", serif; }
.check-top input[type=checkbox] { position: relative; appearance: none; width: 13px; height: 13px; border: 1px solid; border-color: #56898b #cdf7f7 #cdf7f7 #56898b; margin: 4px 19px 0 2px; background: #b4e8ea; }
.check-top input[type=checkbox]::after { content: ""; position: absolute; left: 3px; top: -1px; width: 5px; height: 10px; border: solid #c4105c; border-width: 0 2px 2px 0; transform: rotate(38deg); }
.mask { margin: 5px 6px 0 0; }
.check-top strong { line-height: 30px; white-space: nowrap; }
.erf { font: normal 15px/18px "Liberation Mono", monospace; width: 43px; margin-right: 5px; height: 30px; }
.erfin { width: 103px; height: 30px; border: 2px solid; border-color: #56898b #cdf7f7 #cdf7f7 #56898b; background: #9cdbdb; font: normal 15px/18px "Liberation Mono", monospace; padding: 0 0 8px 4px; margin-right: 5px; }
.help { width: 29px; height: 30px; }
.check-btns { display: flex; gap: 4px; padding: 0 2px 2px; height: 25px; font-family: "Liberation Serif", serif; }
.check-btns .btn { flex: 1; }
.check-run { display: flex; height: 34px; padding: 2px 0 0 2px; gap: 4px; }
.when { flex: 1; text-align: center; font-weight: normal; line-height: 15px; padding-right: 34px; }
.check-run > .btn:nth-of-type(4) { margin-right: -2px; }
.alert { width: 16px; background: #ff1a1a; border: 1px solid #000; border-bottom: 0; margin-top: -2px; text-align: center; line-height: 32px; font-family: "Liberation Serif", serif; flex: none; }
.msg { height: 20px; background: #ffffcc; border-top: 1px solid #000; font-weight: normal; padding-left: 3px; line-height: 19px; }
.checks-foot { background: #9cdbdb; padding: 2px 1px 2px; font-family: "Liberation Serif", serif; }
.checks-foot .btn { width: 100%; height: 24px; }
</style>
